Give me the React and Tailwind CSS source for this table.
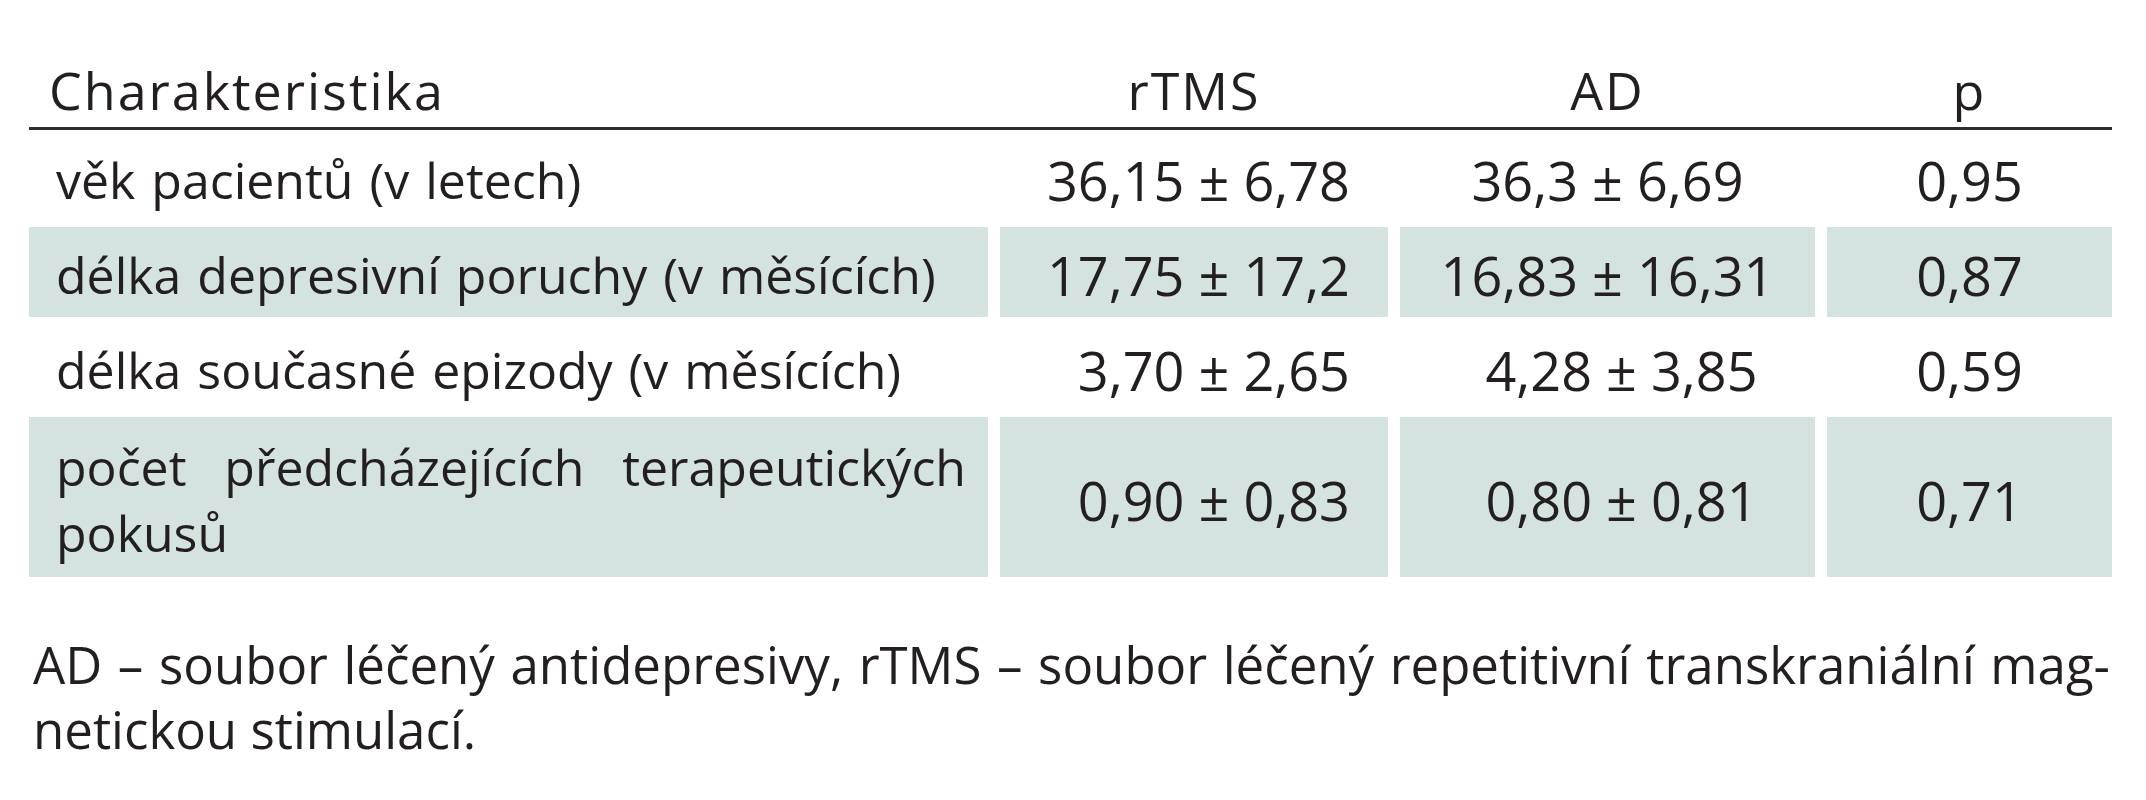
const ROWS = [
  { label: ['věk pacientů (v letech)'], rtms: '36,15 ± 6,78', ad: '36,3 ± 6,69', p: '0,95', shaded: false },
  { label: ['délka depresivní poruchy (v měsících)'], rtms: '17,75 ± 17,2', ad: '16,83 ± 16,31', p: '0,87', shaded: true },
  { label: ['délka současné epizody (v měsících)'], rtms: '3,70 ± 2,65', ad: '4,28 ± 3,85', adShift: true, p: '0,59', shaded: false },
  {
    label: ['počet předcházejících terapeutických', 'pokusů'],
    rtms: '0,90 ± 0,83',
    ad: '0,80 ± 0,81',
    adShift: true,
    p: '0,71',
    shaded: true,
    tall: true,
  },
]

const GRID = 'grid grid-cols-[959px_388px_415px_285px] gap-x-[12px]'

function Cell({ shaded, className, children }) {
  return (
    <div className={`flex items-center pt-[6px] ${shaded ? 'bg-[#d4e3df]' : ''} ${className}`}>
      {children}
    </div>
  )
}

export default function App() {
  return (
    <div
      className="h-[800px] w-[2146px] bg-white text-[50px] leading-[66px] text-[#231f20]"
      style={{ fontFamily: '"Open Sans", "Noto Sans", sans-serif' }}
    >
      <div className="ml-[29px] w-[2083px]">
        {/* hlavička tabulky */}
        <div className={`${GRID} border-b-[3px] border-[#2e2e2e] pt-[57px] pb-[4px] text-[52px] tracking-[2px]`}>
          <div className="pl-[20px]">Charakteristika</div>
          <div className="text-center">rTMS</div>
          <div className="text-center">AD</div>
          <div className="text-center">p</div>
        </div>

        <div className="mt-[2px] flex flex-col gap-y-[5px]">
          {ROWS.map((row, i) => (
            <div key={i} className={`${GRID} ${row.tall ? 'h-[160px]' : 'h-[90px]'}`}>
              <Cell shaded={row.shaded} className="pl-[27px] pr-[22px] [word-spacing:3px]">
                <div className="w-full">
                  {row.label.length > 1 ? (
                    <>
                      <div className="text-justify [text-align-last:justify]">{row.label[0]}</div>
                      <div>{row.label[1]}</div>
                    </>
                  ) : (
                    row.label[0]
                  )}
                </div>
              </Cell>
              <Cell shaded={row.shaded} className="justify-end pr-[38px] text-[54px]">
                {row.rtms}
              </Cell>
              <Cell shaded={row.shaded} className={`justify-center text-[54px] ${row.adShift ? 'pl-[28px]' : ''}`}>
                {row.ad}
              </Cell>
              <Cell shaded={row.shaded} className="justify-center text-[54px]">
                {row.p}
              </Cell>
            </div>
          ))}
        </div>
      </div>

      <div className="mt-[55px] ml-[33px] w-[2077px] text-[51px] leading-[65px]">
        <div className="text-justify [text-align-last:justify]">
          AD – soubor léčený antidepresivy, rTMS – soubor léčený repetitivní transkraniální mag-
        </div>
        <div>netickou stimulací.</div>
      </div>
    </div>
  )
}
